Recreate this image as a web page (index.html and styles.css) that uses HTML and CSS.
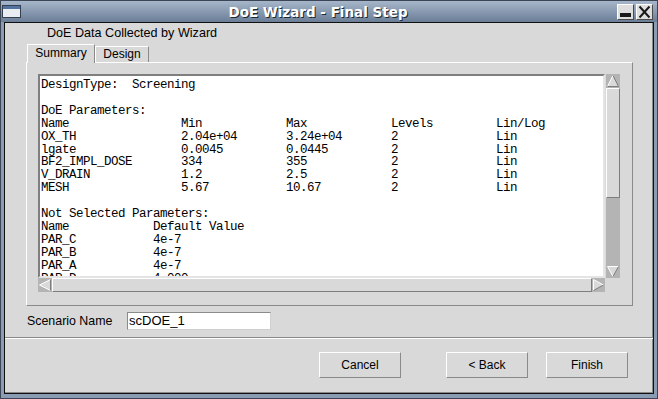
FILE: index.html
```html
<!DOCTYPE html>
<html lang="en">
<head>
    <meta charset="UTF-8">
    <title>DoE Wizard - Final Step</title>
    <link rel="stylesheet" href="styles.css">
</head>
<body>
<div class="window">
    <div class="titlebar">
        <svg class="app-icon" width="19" height="13" viewBox="0 0 19 13">
            <rect x="0.5" y="0.5" width="18" height="12" fill="#e9ecf1" stroke="#34404f"/>
            <rect x="1" y="1" width="17" height="3" fill="#5272a2"/>
        </svg>
        <div class="title">DoE Wizard - Final Step</div>
        <div class="wm-btn">
            <svg width="15" height="14" viewBox="0 0 15 14"><rect x="2" y="8" width="11" height="4" fill="#1a1a1a"/></svg>
        </div>
        <div class="wm-btn">
            <svg width="15" height="14" viewBox="0 0 15 14"><path d="M2.5 1.5 L12.5 12.5 M12.5 1.5 L2.5 12.5" stroke="#1a1a1a" stroke-width="2"/></svg>
        </div>
    </div>
    <div class="frame">
        <div class="client">
            <div class="heading">DoE Data Collected by Wizard</div>
            <div class="tabs">
                <div class="tab active">Summary</div>
                <div class="tab">Design</div>
            </div>
            <div class="panel">
                <div class="scrollpane">
                    <div class="textview">
<pre>DesignType:  Screening

DoE Parameters:
Name                Min            Max            Levels         Lin/Log
OX_TH               2.04e+04       3.24e+04       2              Lin
lgate               0.0045         0.0445         2              Lin
BF2_IMPL_DOSE       334            355            2              Lin
V_DRAIN             1.2            2.5            2              Lin
MESH                5.67           10.67          2              Lin

Not Selected Parameters:
Name            Default Value
PAR_C           4e-7
PAR_B           4e-7
PAR_A           4e-7
PAR_D           4.000</pre>
                    </div>
                    <div class="vscroll">
                        <svg class="arrow" width="14" height="14" viewBox="0 0 14 14">
                            <polygon points="7,1.5 1.5,12.5 12.5,12.5" fill="#d9d9d9"/>
                            <path d="M1.5 12.5 L7 1.5" stroke="#fff" fill="none"/>
                            <path d="M7 1.5 L12.5 12.5 L1.5 12.5" stroke="#7d7d7d" fill="none"/>
                        </svg>
                        <div class="thumb v"></div>
                        <div class="track"></div>
                        <svg class="arrow" width="14" height="13" viewBox="0 0 14 13">
                            <polygon points="1.5,1.5 12.5,1.5 7,11.5" fill="#d9d9d9"/>
                            <path d="M7 11.5 L1.5 1.5 L12.5 1.5" stroke="#fff" fill="none"/>
                            <path d="M12.5 1.5 L7 11.5" stroke="#7d7d7d" fill="none"/>
                        </svg>
                    </div>
                    <div class="hscroll">
                        <svg class="arrow" width="14" height="14" viewBox="0 0 14 14">
                            <polygon points="1.5,7 12.5,1.5 12.5,12.5" fill="#d9d9d9"/>
                            <path d="M12.5 1.5 L1.5 7 L12.5 12.5" stroke="#fff" fill="none"/>
                            <path d="M12.5 1.5 L12.5 12.5" stroke="#7d7d7d" fill="none"/>
                        </svg>
                        <div class="thumb h"></div>
                        <svg class="arrow" width="13" height="14" viewBox="0 0 13 14">
                            <polygon points="1.5,1.5 11.5,7 1.5,12.5" fill="#d9d9d9"/>
                            <path d="M1.5 12.5 L1.5 1.5 L11.5 7" stroke="#fff" fill="none"/>
                            <path d="M11.5 7 L1.5 12.5" stroke="#7d7d7d" fill="none"/>
                        </svg>
                    </div>
                    <div class="corner"></div>
                </div>
            </div>
            <div class="scenario">
                <span class="label">Scenario Name</span>
                <div class="entry">scDOE_1</div>
            </div>
            <div class="separator"></div>
            <div class="actions">
                <button class="btn cancel">Cancel</button>
                <button class="btn back">&lt; Back</button>
                <button class="btn">Finish</button>
            </div>
        </div>
    </div>
</div>
</body>
</html>
```

FILE: styles.css
```css
* {
    box-sizing: border-box;
}
body {
    margin: 0;
    width: 658px;
    height: 399px;
    overflow: hidden;
    font-family: "Liberation Sans", Arial, sans-serif;
    font-size: 12px;
    color: #000;
    background: #1c2430;
}
.window {
    width: 658px;
    height: 399px;
    border: 1px solid #3b4556;
    background: #8a9cb4;
    display: flex;
    flex-direction: column;
}
.titlebar {
    height: 21px;
    flex: none;
    display: flex;
    align-items: center;
    padding: 0 4px 0 1px;
    background: linear-gradient(#a6b6ca, #6b7e97);
}
.app-icon {
    flex: none;
}
.title {
    flex: 1;
    text-align: center;
    color: #fff;
    font-family: "DejaVu Sans", sans-serif;
    font-weight: bold;
    font-size: 13.5px;
    text-shadow: 1px 1px 0 #1d2836;
}
.wm-btn {
    width: 17px;
    height: 16px;
    margin-left: 2px;
    background: #dedede;
    border: 1px solid;
    border-color: #fff #4a4a4a #4a4a4a #fff;
}
.wm-btn svg {
    display: block;
}
.frame {
    flex: 1;
    padding: 0 3px 4px;
    display: flex;
}
.client {
    flex: 1;
    border: 1px solid #101010;
    background: #d9d9d9;
    box-shadow: inset -1px -1px 0 #8a8a8a;
    padding-top: 3px;
    display: flex;
    flex-direction: column;
}
.heading {
    margin-left: 42px;
    height: 14px;
    line-height: 14px;
    font-size: 12.6px;
}
.tabs {
    margin: 4px 0 0 22px;
    height: 19px;
    display: flex;
    align-items: flex-end;
    margin-bottom: -1px;
}
.tab {
    width: 54px;
    height: 16px;
    margin-bottom: 1px;
    line-height: 15px;
    text-align: center;
    border: 1px solid;
    border-bottom: 0;
    border-color: #fff #8a8a8a transparent #fff;
}
.tab.active {
    width: 68px;
    height: 19px;
    margin-bottom: 0;
    line-height: 17px;
    position: relative;
    z-index: 1;
    background: #d9d9d9;
}
.panel {
    margin-left: 21px;
    width: 607px;
    height: 244px;
    border: 1px solid;
    border-color: #fff #8a8a8a #8a8a8a #fff;
    padding: 11px 0 0 11px;
}
.scrollpane {
    display: grid;
    grid-template-columns: 567px 15px;
    grid-template-rows: 204px 14px;
}
.textview {
    background: #fff;
    border: 2px solid;
    border-color: #7f7f7f #e4e4e4 #e4e4e4 #7f7f7f;
    overflow: hidden;
}
.textview pre {
    margin: 0;
    padding: 3px 0 0 1px;
    font-family: "Liberation Mono", "Courier New", monospace;
    font-size: 12.5px;
    letter-spacing: -0.5px;
    line-height: 12.9px;
}
.vscroll {
    margin-left: 1px;
    background: #b4b4b4;
    display: flex;
    flex-direction: column;
}
.hscroll {
    background: #b4b4b4;
    display: flex;
}
.arrow {
    display: block;
    flex: none;
}
.thumb {
    background: #d9d9d9;
    border: 1px solid;
    border-color: #fff #7d7d7d #7d7d7d #fff;
}
.thumb.v {
    height: 110px;
}
.thumb.h {
    flex: 1;
}
.track {
    flex: 1;
}
.scenario {
    margin: 6px 0 0 22px;
    height: 18px;
    display: flex;
    align-items: center;
}
.label {
    width: 100px;
    font-size: 12.4px;
}
.entry {
    width: 144px;
    height: 18px;
    background: #fff;
    border: 1px solid;
    border-color: #8a8a8a #cfcfcf #cfcfcf #8a8a8a;
    padding-left: 1px;
    font-size: 13px;
    line-height: 16px;
}
.separator {
    margin-top: 7px;
    height: 2px;
    border-top: 1px solid #8a8a8a;
    border-bottom: 1px solid #fff;
}
.actions {
    margin-top: 13px;
    padding-right: 25px;
    display: flex;
    justify-content: flex-end;
}
.btn {
    width: 82px;
    height: 26px;
    background: #d9d9d9;
    border: 1px solid;
    border-color: #fff #8a8a8a #8a8a8a #fff;
    font-family: "Liberation Sans", Arial, sans-serif;
    font-size: 12px;
    color: #000;
    padding: 0;
}
.btn.cancel {
    margin-right: 45px;
}
.btn.back {
    margin-right: 18px;
}
```
